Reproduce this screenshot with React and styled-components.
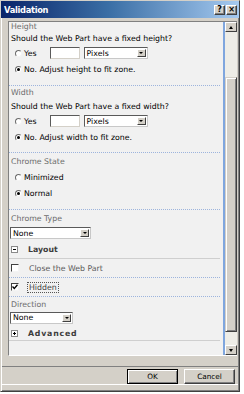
import React from "react";
import styled, { createGlobalStyle } from "styled-components";

const Global = createGlobalStyle`
  html, body {
    margin: 0;
    padding: 0;
    background: #fff;
  }
  * {
    box-sizing: border-box;
  }
`;

const Win = styled.div`
  width: 240px;
  height: 392px;
  background: #d4d0c8;
  border: 1px solid;
  border-color: #d4d0c8 #404040 #404040 #d4d0c8;
  box-shadow: inset 1px 1px #fff, inset -1px -1px #808080;
  display: flex;
  flex-direction: column;
  font-family: "DejaVu Sans", sans-serif;
  font-size: 7.8px;
  color: #000;
`;

const TitleBar = styled.div`
  height: 17px;
  display: flex;
  align-items: center;
  padding: 0 2px 0 3px;
  background: linear-gradient(to right, #0a246a 0%, #3a6ea5 45%, #a6caf0 100%);
  color: #fff;
  font-weight: bold;
  font-size: 8.3px;
  letter-spacing: -0.3px;
`;

const TitleText = styled.span`
  flex: 1;
`;

const CapBtn = styled.div`
  width: 11px;
  height: 10px;
  margin-left: ${(p) => (p.$gap ? "1px" : "0")};
  background: #d4d0c8;
  border: 1px solid;
  border-color: #fff #404040 #404040 #fff;
  box-shadow: inset -1px -1px #808080;
  color: #000;
  font-size: 8px;
  line-height: 8px;
  text-align: center;
  font-weight: bold;
  letter-spacing: 0;
`;

const Body = styled.div`
  padding: 3px 2px 0 7px;
`;

const Panel = styled.div`
  height: 335px;
  display: flex;
  border-top: 1px solid #808080;
  border-left: 1px solid #808080;
  border-bottom: 1px solid #fff;
`;

const Content = styled.div`
  flex: 1;
  background: #f1f1f1;
  border-right: 2px solid #7fa6de;
  display: flex;
  flex-direction: column;
`;

const Section = styled.div`
  padding-bottom: ${(p) => p.$pb || 0}px;
  margin-right: 3px;
  border-bottom: ${(p) =>
    p.$line === "dot"
      ? "1px dotted #9db4dd"
      : p.$line === "solid"
      ? "1px solid #cfcfcf"
      : "none"};
`;

const Label = styled.div`
  height: ${(p) => p.$h}px;
  display: flex;
  align-items: center;
  padding-left: 2px;
  color: #6b6b6b;
`;

const Question = styled.div`
  height: ${(p) => p.$h}px;
  display: flex;
  align-items: center;
  padding-left: 2px;
`;

const OptRow = styled.div`
  height: ${(p) => p.$h}px;
  display: flex;
  align-items: center;
  padding-left: ${(p) => p.$pl || 6}px;
  color: ${(p) => p.$color || "#000"};
`;

const Radio = styled.span`
  width: 7px;
  height: 7px;
  border-radius: 50%;
  background: #fff;
  border: 1px solid;
  border-color: #6a6a6a #f4f4f4 #f4f4f4 #6a6a6a;
  margin-right: 2px;
  position: relative;
  flex: none;
  &::after {
    content: "";
    display: ${(p) => (p.$on ? "block" : "none")};
    position: absolute;
    left: 1px;
    top: 1px;
    width: 3px;
    height: 3px;
    border-radius: 50%;
    background: #000;
  }
`;

const OptText = styled.span`
  margin-right: ${(p) => p.$mr || 0}px;
`;

const TextBox = styled.span`
  width: 30px;
  height: 12px;
  background: #fff;
  border: 1px solid;
  border-color: #5a5a5a #d4d0c8 #d4d0c8 #5a5a5a;
  margin-right: 4px;
`;

const Select = styled.div`
  width: ${(p) => p.$w}px;
  height: 12px;
  background: #fff;
  border: 1px solid;
  border-color: #5a5a5a #c8c8c8 #c8c8c8 #5a5a5a;
  display: flex;
  align-items: center;
  padding: 0 1px 0 2px;
`;

const SelectText = styled.span`
  flex: 1;
  line-height: 9px;
`;

const DropBtn = styled.span`
  width: 9px;
  height: 8px;
  background: #d4d0c8;
  border: 1px solid;
  border-color: #fff #404040 #404040 #fff;
  display: flex;
  align-items: center;
  justify-content: center;
  &::after {
    content: "";
    border-left: 2px solid transparent;
    border-right: 2px solid transparent;
    border-top: 2px solid #000;
  }
`;

const SelRow = styled.div`
  height: ${(p) => p.$h}px;
  display: flex;
  align-items: center;
  padding-left: 1px;
`;

const GroupHead = styled.div`
  height: ${(p) => p.$h}px;
  margin-top: ${(p) => p.$mt || 0}px;
  margin-right: 3px;
  display: flex;
  align-items: center;
  padding-left: 2px;
  font-weight: bold;
  color: #3c3c3c;
  letter-spacing: ${(p) => p.$ls || 0}px;
  border-bottom: 1px solid #cfcfcf;
`;

const ToggleBox = styled.span`
  width: 7px;
  height: 7px;
  border: 1px solid #8a8a8a;
  background: #fff;
  margin-right: 10px;
  position: relative;
  flex: none;
  &::before {
    content: "";
    position: absolute;
    left: 1px;
    top: 2px;
    width: 3px;
    height: 1px;
    background: #000;
  }
  &::after {
    content: "";
    display: ${(p) => (p.$plus ? "block" : "none")};
    position: absolute;
    left: 2px;
    top: 1px;
    width: 1px;
    height: 3px;
    background: #000;
  }
`;

const Check = styled.span`
  width: 8px;
  height: 8px;
  background: #fff;
  border: 1px solid;
  border-color: #404040 #f4f4f4 #f4f4f4 #404040;
  margin-right: ${(p) => p.$mr}px;
  flex: none;
  display: flex;
  align-items: center;
  justify-content: center;
`;

const Focus = styled.span`
  border: 1px dotted #555;
  padding: 0 1px;
  line-height: 9px;
  color: #444;
`;

const Scroll = styled.div`
  width: 12px;
  background: #eeede7;
  display: flex;
  flex-direction: column;
`;

const ScrollBtn = styled.div`
  height: 10px;
  background: #d4d0c8;
  border: 1px solid;
  border-color: #fff #404040 #404040 #fff;
  display: flex;
  align-items: center;
  justify-content: center;
  &::after {
    content: "";
    border-left: 2px solid transparent;
    border-right: 2px solid transparent;
    ${(p) => (p.$up ? "border-bottom: 3px solid #000;" : "border-top: 3px solid #000;")}
  }
`;

const Thumb = styled.div`
  height: 255px;
  margin-top: 45px;
  background: #d4d0c8;
  border: 1px solid;
  border-color: #d4d0c8 #404040 #404040 #d4d0c8;
  box-shadow: inset 1px 1px #fff, inset -1px -1px #808080;
`;

const Track = styled.div`
  flex: 1;
`;

const Footer = styled.div`
  margin-top: 10px;
  border-top: 1px solid #808080;
  box-shadow: 0 1px #fff;
  margin-left: 1px;
  margin-right: 1px;
  padding: 2px 3px 0 0;
  display: flex;
  justify-content: flex-end;
  gap: 6px;
`;

const Btn = styled.div`
  width: 51px;
  height: 15px;
  background: #d4d0c8;
  border: 1px solid;
  border-color: ${(p) => (p.$def ? "#000" : "#fff #404040 #404040 #fff")};
  box-shadow: ${(p) =>
    p.$def ? "inset 1px 1px #fff, inset -1px -1px #808080" : "inset -1px -1px #808080"};
  display: flex;
  align-items: center;
  justify-content: center;
  font-size: 7.3px;
  color: #000;
`;

const CheckMark = () => (
  <svg width="6" height="6" viewBox="0 0 6 6">
    <path d="M0.5 2.5 L2.3 4.5 L5.5 0.8" stroke="#000" strokeWidth="1.3" fill="none" />
  </svg>
);

const Dropdown = ({ w, value }) => (
  <Select $w={w}>
    <SelectText>{value}</SelectText>
    <DropBtn />
  </Select>
);

const SizeChoice = ({ dim }) => (
  <>
    <OptRow $h={14}>
      <Radio />
      <OptText $mr={13}>Yes</OptText>
      <TextBox />
      <Dropdown w={64} value="Pixels" />
    </OptRow>
    <OptRow $h={18}>
      <Radio $on />
      <OptText>No. Adjust {dim} to fit zone.</OptText>
    </OptRow>
  </>
);

export default function App() {
  return (
    <>
      <Global />
      <Win>
        <TitleBar>
          <TitleText>Validation</TitleText>
          <CapBtn>?</CapBtn>
          <CapBtn $gap>×</CapBtn>
        </TitleBar>
        <Body>
          <Panel>
            <Content>
              <Section $line="dot" $pb={7}>
                <Label $h={8}>Height</Label>
                <Question $h={16}>Should the Web Part have a fixed height?</Question>
                <SizeChoice dim="height" />
              </Section>
              <Section $line="dot" $pb={6}>
                <Label $h={12}>Width</Label>
                <Question $h={16}>Should the Web Part have a fixed width?</Question>
                <SizeChoice dim="width" />
              </Section>
              <Section $line="dot" $pb={8}>
                <Label $h={16}>Chrome State</Label>
                <OptRow $h={16}>
                  <Radio />
                  <OptText>Minimized</OptText>
                </OptRow>
                <OptRow $h={16}>
                  <Radio $on />
                  <OptText>Normal</OptText>
                </OptRow>
              </Section>
              <Section>
                <Label $h={16}>Chrome Type</Label>
                <SelRow $h={14}>
                  <Dropdown w={81} value="None" />
                </SelRow>
              </Section>
              <GroupHead $h={19}>
                <ToggleBox />
                Layout
              </GroupHead>
              <Section $line="dot">
                <OptRow $h={18} $pl={2} $color="#5a5a5a">
                  <Check $mr={10} />
                  <OptText>Close the Web Part</OptText>
                </OptRow>
              </Section>
              <Section $line="dot">
                <OptRow $h={18} $pl={2}>
                  <Check $mr={8}>
                    <CheckMark />
                  </Check>
                  <Focus>Hidden</Focus>
                </OptRow>
              </Section>
              <Section>
                <Label $h={14}>Direction</Label>
                <SelRow $h={13}>
                  <Dropdown w={63} value="None" />
                </SelRow>
              </Section>
              <GroupHead $h={14} $mt={3} $ls={0.8}>
                <ToggleBox $plus />
                Advanced
              </GroupHead>
            </Content>
            <Scroll>
              <ScrollBtn $up />
              <Thumb />
              <Track />
              <ScrollBtn />
            </Scroll>
          </Panel>
        </Body>
        <Footer>
          <Btn $def>OK</Btn>
          <Btn>Cancel</Btn>
        </Footer>
      </Win>
    </>
  );
}
